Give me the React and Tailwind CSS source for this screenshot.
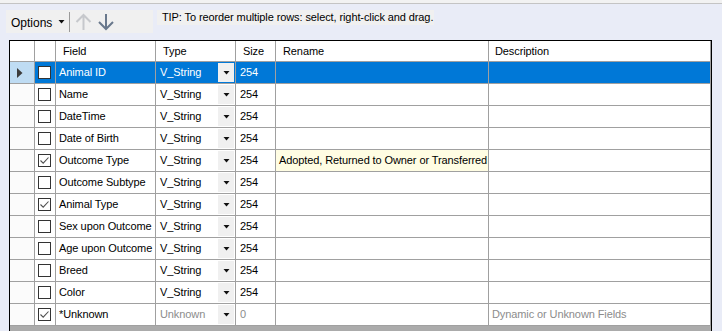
import React from "react";

const rows = [
  { f: "Animal ID", sel: true },
  { f: "Name" },
  { f: "DateTime" },
  { f: "Date of Birth" },
  { f: "Outcome Type", chk: true, rename: "Adopted, Returned to Owner or Transferred" },
  { f: "Outcome Subtype" },
  { f: "Animal Type", chk: true },
  { f: "Sex upon Outcome" },
  { f: "Age upon Outcome" },
  { f: "Breed" },
  { f: "Color" },
  { f: "*Unknown", chk: true, unk: true },
];

function Check({ checked }) {
  return (
    <div className="w-[13px] h-[13px] border border-[#333333] bg-white flex items-center justify-center">
      {checked && (
        <svg width="11" height="11" viewBox="0 0 11 11">
          <path d="M1.5 5.5 L4.2 8.2 L9.5 2.5" fill="none" stroke="#505050" strokeWidth="1.1" />
        </svg>
      )}
    </div>
  );
}

function Caret() {
  return (
    <svg width="7" height="4" viewBox="0 0 7 4">
      <path d="M0.5 0 L6.5 0 L3.5 3.5 Z" fill="#111" />
    </svg>
  );
}

export default function App() {
  return (
    <div
      className="w-[722px] h-[331px] bg-[#e9ecf7] overflow-hidden text-[11px] tracking-[-0.1px] text-black"
      style={{ fontFamily: "'Liberation Sans', Arial, sans-serif" }}
    >
      <div className="h-[3px] bg-[#f2f2f2]" />
      <div className="h-px bg-[#c4c4c4]" />
      <div className="flex mt-[6px] h-[23px]">
        <div className="ml-[6px] w-[147px] h-[23px] bg-[#f0f0f0] flex items-center">
          <span className="ml-[5px] mt-[2px] leading-none text-[12px] tracking-normal">Options</span>
          <span className="ml-[6px] mt-[1px]"><Caret /></span>
          <div className="ml-[4px] w-px h-[20px] bg-[#9a9a9a]" />
          <svg className="ml-[5px]" width="17" height="18" viewBox="0 0 17 18">
            <path d="M8.5 17 V2 M1.5 9 L8.5 2 L15.5 9" fill="none" stroke="#c6c8cc" strokeWidth="2" />
          </svg>
          <svg className="ml-[5px]" width="18" height="18" viewBox="0 0 18 18">
            <path d="M9 1 V16 M2 9 L9 16 L16 9" fill="none" stroke="#69788c" strokeWidth="2" />
          </svg>
        </div>
        <div className="ml-[4px] w-[277px] h-[15px] bg-[#f0f0f0] flex items-center whitespace-nowrap">
          <span className="ml-[5px] leading-none">TIP: To reorder multiple rows: select, right-click and drag.</span>
        </div>
      </div>

      <div className="ml-[9px] mt-[7px] w-[703px] h-[300px] border border-black bg-[#ababab] flex flex-col">
        <div className="flex h-[21px] bg-white border-b border-[#a0a0a0]">
          <div className="w-[25px] border-r border-[#a0a0a0]" />
          <div className="w-[21px] border-r border-[#a0a0a0]" />
          <div className="w-[100px] border-r border-[#a0a0a0] pl-[7px] flex items-center">Field</div>
          <div className="w-[80px] border-r border-[#a0a0a0] pl-[7px] flex items-center">Type</div>
          <div className="w-[40px] border-r border-[#a0a0a0] pl-[7px] flex items-center">Size</div>
          <div className="w-[213px] border-r border-[#a0a0a0] pl-[7px] flex items-center">Rename</div>
          <div className="w-[222px] border-r border-[#a0a0a0] pl-[6px] flex items-center">Description</div>
        </div>
        {rows.map((r, i) => {
          const sel = r.sel;
          const cellBg = sel ? "bg-[#0078d7] text-white" : "bg-white";
          const grey = r.unk ? "text-[#8c8c8c]" : "";
          return (
            <div key={i} className="flex h-[22px] border-b border-[#a0a0a0]">
              <div className={`w-[25px] border-r border-[#a0a0a0] flex items-center ${sel ? "bg-[#bfdcf3]" : "bg-[#fbfbfb]"}`}>
                {sel && (
                  <svg className="ml-[7px]" width="6" height="10" viewBox="0 0 6 10">
                    <path d="M0 0 L5.5 5 L0 10 Z" fill="#3c3c3c" />
                  </svg>
                )}
              </div>
              <div className={`w-[21px] border-r border-[#a0a0a0] flex items-center pl-[3px] ${cellBg}`}>
                <Check checked={r.chk} />
              </div>
              <div className={`w-[100px] border-r border-[#a0a0a0] pl-[3px] flex items-center whitespace-nowrap overflow-hidden ${cellBg}`}>
                {r.f}
              </div>
              <div className={`w-[80px] border-r border-[#a0a0a0] pl-[4px] pr-px flex items-center ${cellBg}`}>
                <span className={`flex-1 ${grey}`}>{r.unk ? "Unknown" : "V_String"}</span>
                <div className="w-[16px] h-[19px] bg-[#f0f0f0] flex items-center justify-center">
                  <Caret />
                </div>
              </div>
              <div className={`w-[40px] border-r border-[#a0a0a0] pl-[4px] flex items-center ${cellBg} ${grey}`}>
                {r.unk ? "0" : "254"}
              </div>
              <div className={`w-[213px] border-r border-[#a0a0a0] pl-[3px] flex items-center whitespace-nowrap ${r.rename ? "bg-[#fffde3]" : cellBg}`}>
                {r.rename || ""}
              </div>
              <div className={`w-[222px] border-r border-[#a0a0a0] pl-[3px] flex items-center ${cellBg} ${grey}`}>
                {r.unk ? "Dynamic or Unknown Fields" : ""}
              </div>
            </div>
          );
        })}
      </div>
    </div>
  );
}
